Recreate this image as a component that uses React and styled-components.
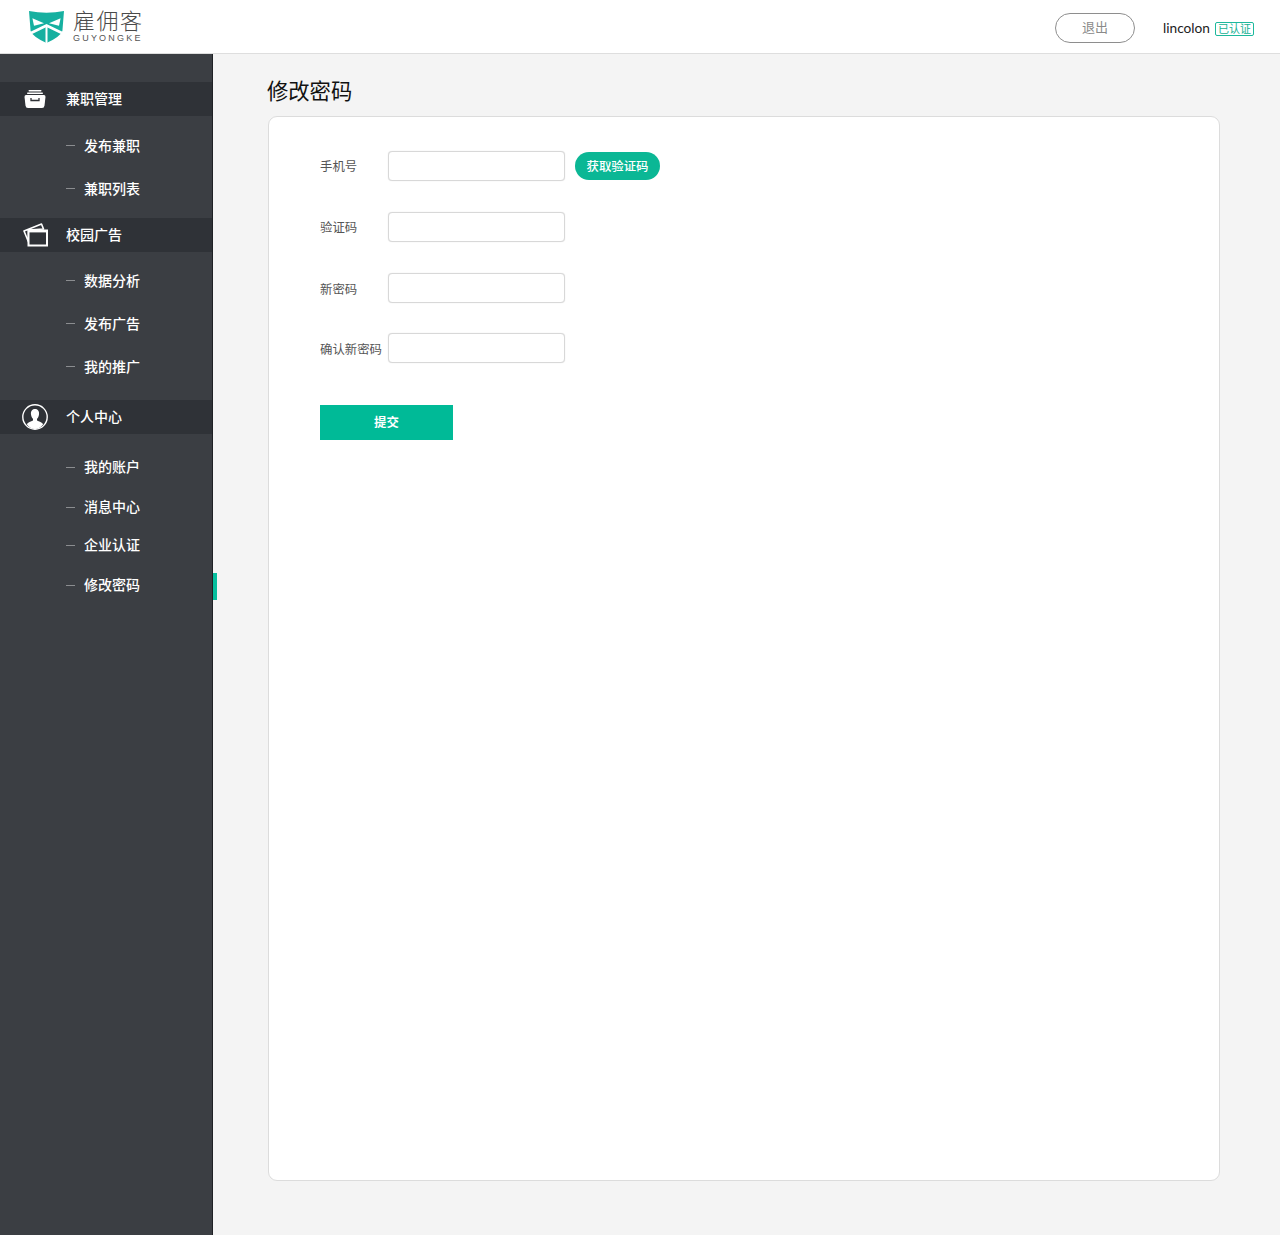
import styled, { createGlobalStyle } from "styled-components";

const GlobalStyle = createGlobalStyle`
  html, body {
    margin: 0;
    padding: 0;
    background: #f4f4f4;
    font-family: "Noto Sans CJK SC", "Liberation Sans", sans-serif;
  }
  * { box-sizing: border-box; }
`;

const Page = styled.div`
  width: 1280px;
  height: 1235px;
  display: flex;
  flex-direction: column;
`;

const Header = styled.header`
  height: 54px;
  flex: none;
  background: #fff;
  border-bottom: 1px solid #dedede;
  display: flex;
  align-items: flex-start;
  justify-content: space-between;
  padding: 11px 26px 0 29px;
`;

const Brand = styled.div`
  display: flex;
  gap: 9px;
`;

const BrandText = styled.div`
  display: flex;
  flex-direction: column;
  margin-top: -3px;
`;

const BrandName = styled.span`
  font-size: 22px;
  line-height: 22px;
  font-weight: 300;
  letter-spacing: 1.5px;
  color: #4a4a4a;
`;

const BrandSub = styled.span`
  font-family: "Liberation Sans", sans-serif;
  font-size: 9px;
  line-height: 9px;
  letter-spacing: 2.2px;
  color: #555;
  white-space: nowrap;
  margin-top: 4px;
`;

const UserArea = styled.div`
  display: flex;
  align-items: center;
  margin-top: 2px;
`;

const Logout = styled.button`
  width: 80px;
  height: 30px;
  padding: 0 0 3px;
  background: #fff;
  border: 1px solid #8e8e8e;
  border-radius: 15px;
  color: #8a8a8a;
  font-family: inherit;
  font-size: 13px;
  margin-right: 28px;
`;

const UserName = styled.span`
  font-family: Lato, sans-serif;
  font-size: 13.7px;
  line-height: 18px;
  color: #222;
  margin-right: 5px;
  margin-bottom: 1px;
`;

const Badge = styled.span`
  width: 39px;
  height: 14px;
  border: 1px solid #1db99c;
  border-radius: 2px;
  color: #16b093;
  font-size: 11px;
  line-height: 11px;
  text-align: center;
  margin-top: 1px;
`;

const Body = styled.div`
  flex: 1;
  display: flex;
  min-height: 0;
`;

const Sidebar = styled.nav`
  width: 213px;
  flex: none;
  background: #3b3e43;
  border-right: 1px solid #1f2125;
  padding-top: 28px;
`;

const GroupHead = styled.div`
  height: 34px;
  background: #2f3237;
  display: flex;
  align-items: center;
  color: #fff;
  font-size: 14px;
  font-weight: 500;
`;

const HeadIcon = styled.span`
  width: 66px;
  height: 34px;
  flex: none;
  display: flex;
  align-items: center;
  justify-content: center;
  padding-left: 4px;
`;

const HeadText = styled.span`
  margin-bottom: 2px;
`;

const ItemList = styled.ul`
  list-style: none;
  margin: 0;
  padding: ${(p) => p.$top}px 0 ${(p) => p.$bottom}px;
`;

const Item = styled.li`
  position: relative;
  height: ${(p) => p.$height}px;
  display: flex;
  align-items: center;
  padding-left: 66px;
  color: #fff;
  font-size: 14px;
  font-weight: 500;

  &::before {
    content: "";
    width: 9px;
    height: 1px;
    background: #8b8d90;
    margin-right: 9px;
  }

  ${(p) =>
    p.$active &&
    `&::after {
      content: "";
      position: absolute;
      top: 10px;
      right: -5px;
      width: 4px;
      height: 27px;
      background: #06bf9e;
    }`}
`;

const ItemText = styled.span`
  margin-bottom: 2px;
`;

const Main = styled.main`
  flex: 1;
  padding: 19px 60px 54px 54px;
  display: flex;
  flex-direction: column;
`;

const Title = styled.h1`
  margin: 0 0 9px;
  font-size: 21.3px;
  line-height: 34px;
  height: 34px;
  font-weight: 400;
  color: #111;
`;

const Card = styled.section`
  flex: 1;
  margin-left: 1px;
  background: #fff;
  border: 1px solid #dcdcdc;
  border-radius: 9px;
  padding: 34px 0 0 51px;
`;

const Row = styled.div`
  height: 30px;
  display: flex;
  align-items: center;
  margin-bottom: ${(p) => p.$gap}px;
`;

const Label = styled.label`
  width: 68px;
  flex: none;
  font-size: 12.4px;
  color: #555;
  white-space: nowrap;
  padding-top: ${(p) => p.$drop}px;
`;

const Field = styled.input`
  width: 177px;
  height: 30px;
  background: #fff;
  border: 1px solid #d8d8d8;
  box-shadow: 0 0 1px #d8d8d8;
  border-radius: 4px;
  outline: none;
`;

const CodeButton = styled.button`
  width: 85px;
  height: 28px;
  margin-left: 10px;
  padding: 0;
  border: none;
  border-radius: 14px;
  background: #0bb795;
  color: #fff;
  font-family: inherit;
  font-size: 12.4px;
  font-weight: 500;
`;

const Submit = styled.button`
  display: block;
  width: 133px;
  height: 35px;
  margin-top: 42px;
  padding: 0 0 2px;
  border: none;
  background: #00ba97;
  color: #fff;
  font-family: inherit;
  font-size: 12.4px;
  font-weight: 700;
`;

const LogoMark = () => (
  <svg width="35" height="32" viewBox="0 0 35 32">
    <path d="M0 0 Q17.5 3.5 35 0 L33.4 20 Q31 26 17.5 32 Q4 26 1.6 20 Z" fill="#16b0a0" />
    <path d="M3.4 7.3 L15 12.3 L5 14.8 Z M31.6 7.3 L20 12.3 L30 14.8 Z" fill="#fff" />
    <path d="M1 22.5 L17.5 14.5 L34 22.5" fill="none" stroke="#fff" strokeWidth="2.6" />
    <rect x="16.5" y="15" width="2" height="17" fill="#fff" />
  </svg>
);

const DrawerIcon = () => (
  <svg width="22" height="18" viewBox="0 0 22 18">
    <rect x="4.5" y="0" width="13" height="1.5" rx="0.7" fill="#fff" />
    <rect x="3" y="2.5" width="16" height="1.5" rx="0.7" fill="#fff" />
    <path d="M2 5 H20 Q21.5 5 21.5 7 L20.5 15.5 Q20.2 18 18 18 H4 Q1.8 18 1.5 15.5 L0.5 7 Q0.5 5 2 5 Z" fill="#fff" />
    <path d="M7 8 V10.5 H15 V8" fill="none" stroke="#2f3237" strokeWidth="1.3" />
  </svg>
);

const PhotosIcon = () => (
  <svg width="25" height="24" viewBox="0 0 25 24">
    <path d="M1 8 L18.5 1 L20.5 6 L5.5 7 V19 Z" fill="none" stroke="#fff" strokeWidth="1.6" strokeLinejoin="round" />
    <rect x="5.5" y="7.5" width="18.5" height="15" fill="#2f3237" stroke="#fff" strokeWidth="2" />
    <rect x="5" y="7" width="19.5" height="2.4" fill="#fff" />
  </svg>
);

const UserIcon = () => (
  <svg width="26" height="26" viewBox="0 0 26 26">
    <circle cx="13" cy="13" r="12.2" fill="#2f3237" stroke="#fff" strokeWidth="1.4" />
    <path d="M13 5 C9.8 5 8.6 7.6 9 10.4 C9.3 12.4 10.2 14 11 14.8 V16.4 C9 17.6 5.8 18.2 4.8 20.2 C6.8 23.2 9.8 25 13 25 C16.2 25 19.2 23.2 21.2 20.2 C20.2 18.2 17 17.6 15 16.4 V14.8 C15.8 14 16.7 12.4 17 10.4 C17.4 7.6 16.2 5 13 5 Z" fill="#fff" />
  </svg>
);

const groups = [
  {
    name: "兼职管理",
    icon: <DrawerIcon />,
    top: 8,
    bottom: 8,
    items: [["发布兼职", 43], ["兼职列表", 43]],
  },
  {
    name: "校园广告",
    icon: <PhotosIcon />,
    top: 7,
    bottom: 12,
    items: [["数据分析", 43], ["发布广告", 43], ["我的推广", 43]],
  },
  {
    name: "个人中心",
    icon: <UserIcon />,
    top: 13,
    bottom: 0,
    items: [["我的账户", 40], ["消息中心", 40], ["企业认证", 36], ["修改密码", 44, true]],
  },
];

const fields = [
  { label: "手机号", gap: 31, drop: 0, code: true },
  { label: "验证码", gap: 31, drop: 0 },
  { label: "新密码", gap: 30, drop: 1 },
  { label: "确认新密码", gap: 0, drop: 2 },
];

export default function App() {
  return (
    <Page>
      <GlobalStyle />
      <Header>
        <Brand>
          <LogoMark />
          <BrandText>
            <BrandName>雇佣客</BrandName>
            <BrandSub>GUYONGKE</BrandSub>
          </BrandText>
        </Brand>
        <UserArea>
          <Logout>退出</Logout>
          <UserName>lincolon</UserName>
          <Badge>已认证</Badge>
        </UserArea>
      </Header>
      <Body>
        <Sidebar>
          {groups.map((g) => (
            <div key={g.name}>
              <GroupHead>
                <HeadIcon>{g.icon}</HeadIcon>
                <HeadText>{g.name}</HeadText>
              </GroupHead>
              <ItemList $top={g.top} $bottom={g.bottom}>
                {g.items.map(([text, height, active]) => (
                  <Item key={text} $height={height} $active={active}>
                    <ItemText>{text}</ItemText>
                  </Item>
                ))}
              </ItemList>
            </div>
          ))}
        </Sidebar>
        <Main>
          <Title>修改密码</Title>
          <Card>
            {fields.map((f) => (
              <Row key={f.label} $gap={f.gap}>
                <Label $drop={f.drop}>{f.label}</Label>
                <Field />
                {f.code && <CodeButton>获取验证码</CodeButton>}
              </Row>
            ))}
            <Submit>提交</Submit>
          </Card>
        </Main>
      </Body>
    </Page>
  );
}
